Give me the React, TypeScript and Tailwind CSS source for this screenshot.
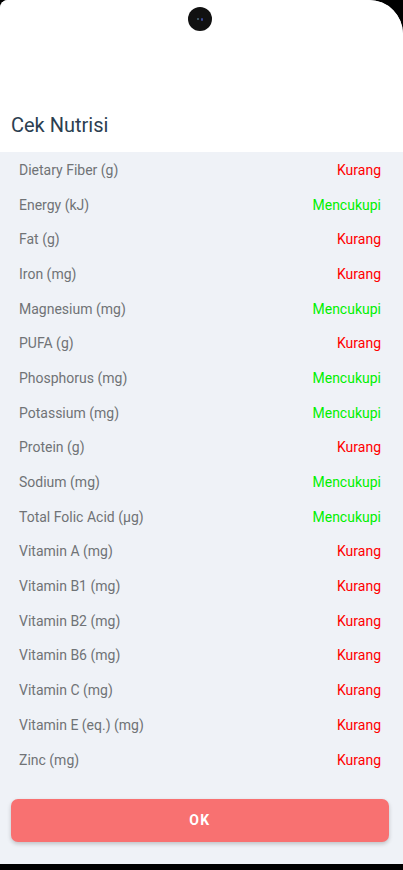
const items: [string, boolean][] = [
  ["Dietary Fiber (g)", false],
  ["Energy (kJ)", true],
  ["Fat (g)", false],
  ["Iron (mg)", false],
  ["Magnesium (mg)", true],
  ["PUFA (g)", false],
  ["Phosphorus (mg)", true],
  ["Potassium (mg)", true],
  ["Protein (g)", false],
  ["Sodium (mg)", true],
  ["Total Folic Acid (µg)", true],
  ["Vitamin A (mg)", false],
  ["Vitamin B1 (mg)", false],
  ["Vitamin B2 (mg)", false],
  ["Vitamin B6 (mg)", false],
  ["Vitamin C (mg)", false],
  ["Vitamin E (eq.) (mg)", false],
  ["Zinc (mg)", false],
]

export default function App() {
  return (
    <div className="w-[403px] h-[870px] bg-black flex flex-col" style={{ fontFamily: "Roboto, 'Noto Sans', sans-serif" }}>
      <div className="relative flex-1 flex flex-col bg-[#eff2f7] rounded-tl-[8px] rounded-tr-[34px] overflow-hidden">
        <div className="absolute left-[188px] top-[7px] w-[24px] h-[24px] rounded-full bg-[#111] flex items-center justify-center gap-[2px]">
          <div className="w-[2px] h-[2px] rounded-full bg-[#4a6a7a]" />
          <div className="w-[2px] h-[3px] rounded-full bg-[#3a4a9a]" />
        </div>
        <div className="bg-white h-[152px] flex items-end px-[11px] pb-[17px]">
          <h1 className="text-[20px] text-[#2c3e50] leading-none">Cek Nutrisi</h1>
        </div>
        <div className="flex flex-col pt-[1px]">
          {items.map(([name, ok]) => (
            <div key={name} className="h-[34.7px] flex items-center justify-between pl-[19px] pr-[22px] text-[14px]">
              <span className="text-[#707376]">{name}</span>
              <span className={ok ? "text-[#00f000]" : "text-[#ff0000]"}>{ok ? "Mencukupi" : "Kurang"}</span>
            </div>
          ))}
        </div>
        <div className="pl-[11px] pr-[14px] pt-[22px]">
          <button className="w-full h-[43px] rounded-[7px] bg-[#f87171] text-white font-bold text-[14px] tracking-[0.1em] shadow-[0_2px_4px_rgba(0,0,0,0.2)]">
            OK
          </button>
        </div>
      </div>
      <div className="h-[6px]" />
    </div>
  )
}
